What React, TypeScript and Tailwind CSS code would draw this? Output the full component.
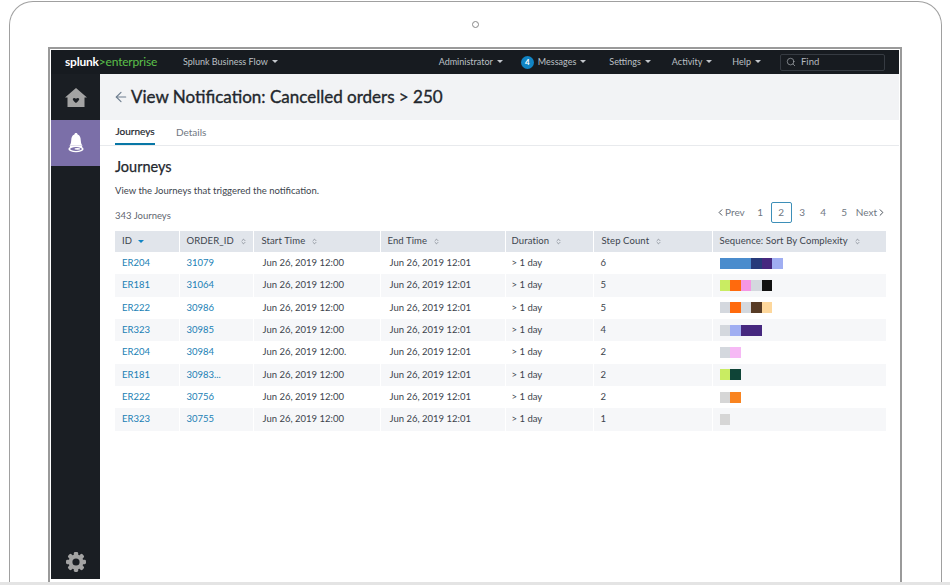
import { ArrowLeft, ChevronLeft, ChevronRight, ChevronsUpDown, Search } from "lucide-react"

const rows = [
  { id: "ER204", order: "31079", start: "Jun 26, 2019 12:00", steps: 6, seq: [["#4a8ccd", 3], ["#263a7a", 1], ["#46287f", 1], ["#a0aef2", 1]] },
  { id: "ER181", order: "31064", start: "Jun 26, 2019 12:00", steps: 5, seq: [["#c9ec62", 1], ["#ff6a0d", 1], ["#f596e4", 1], ["#d4d8de", 1], ["#111111", 1]] },
  { id: "ER222", order: "30986", start: "Jun 26, 2019 12:00", steps: 5, seq: [["#d4d8de", 1], ["#ff6a0d", 1], ["#d4d8de", 1], ["#573b25", 1], ["#fdd79c", 1]] },
  { id: "ER323", order: "30985", start: "Jun 26, 2019 12:00", steps: 4, seq: [["#d4d8de", 1], ["#a0aef2", 1], ["#46287f", 2]] },
  { id: "ER204", order: "30984", start: "Jun 26, 2019 12:00.", steps: 2, seq: [["#d4d8de", 1], ["#f6b9f5", 1]] },
  { id: "ER181", order: "30983...", start: "Jun 26, 2019 12:00", steps: 2, seq: [["#c9ec62", 1], ["#0f4437", 1]] },
  { id: "ER222", order: "30756", start: "Jun 26, 2019 12:00", steps: 2, seq: [["#d6d6d6", 1], ["#f98420", 1]] },
  { id: "ER323", order: "30755", start: "Jun 26, 2019 12:00", steps: 1, seq: [["#d6d6d6", 1]] },
] as { id: string; order: string; start: string; steps: number; seq: [string, number][] }[]

const headers = [
  { label: "ID", width: 64, pad: "pl-[7px]", sorted: true },
  { label: "ORDER_ID", width: 74, pad: "pl-[7px] border-l border-white" },
  { label: "Start Time", width: 127, pad: "pl-[8px] border-l border-white" },
  { label: "End Time", width: 125, pad: "pl-[7px] border-l border-white" },
  { label: "Duration", width: 88, pad: "pl-[6px] border-l border-white" },
  { label: "Step Count", width: 119, pad: "pl-[8px] border-l border-white" },
  { label: "Sequence: Sort By Complexity", width: 174, pad: "pl-[7px] border-l border-white" },
]

function Caret() {
  return <span className="inline-block ml-[4px] mb-[2px] border-x-[3px] border-t-[3px] border-x-transparent border-t-[#c3c7cc]" />
}

function NavItem({ label }: { label: string }) {
  return (
    <span className="text-[9px] text-[#bcc0c5] flex items-center">
      {label}
      <Caret />
    </span>
  )
}

function HomeIcon() {
  return (
    <svg width="22" height="19" viewBox="0 0 22 19">
      <path d="M11 0 L22 9.5 L19.5 9.5 L19.5 19 L2.5 19 L2.5 9.5 L0 9.5 Z" fill="#a3a3a3" />
      <path d="M11 15 C8 12.6 7.6 11.6 7.9 10.7 C8.3 9.6 10 9.6 11 10.8 C12 9.6 13.7 9.6 14.1 10.7 C14.4 11.6 14 12.6 11 15 Z" fill="#1a1e23" />
    </svg>
  )
}

function BellIcon() {
  return (
    <svg width="18" height="20" viewBox="0 0 18 20">
      <path d="M9 0 C10 0 10.6 .7 10.6 1.6 C13 2.4 13.6 4.6 13.8 7.5 C14 10.5 14.6 11.4 15.4 12.6 L2.6 12.6 C3.4 11.4 4 10.5 4.2 7.5 C4.4 4.6 5 2.4 7.4 1.6 C7.4 .7 8 0 9 0 Z" fill="#ffffff" />
      <path d="M2.6 12.4 L15.4 12.4 L15 14 L3 14 Z" fill="#ffffff" />
      <ellipse cx="9" cy="16" rx="7.6" ry="3.2" fill="#ffffff" />
      <ellipse cx="9" cy="16" rx="5.8" ry="1.9" fill="#7b6fa8" />
      <ellipse cx="10.4" cy="15.9" rx="3" ry="0.8" fill="#ffffff" />
    </svg>
  )
}

function GearIcon() {
  const teeth = [0, 45, 90, 135]
  return (
    <svg width="20" height="20" viewBox="0 0 20 20">
      {teeth.map((deg) => (
        <rect key={deg} x="7.8" y="0" width="4.4" height="20" rx="1.4" fill="#a3a3a3" transform={`rotate(${deg} 10 10)`} />
      ))}
      <circle cx="10" cy="10" r="7.4" fill="#a3a3a3" />
      <circle cx="10" cy="10" r="3.6" fill="#1a1e23" />
    </svg>
  )
}

export default function App() {
  return (
    <div className="w-[950px] h-[585px] bg-white flex flex-col overflow-hidden relative font-['Lato',sans-serif]">
      <div className="absolute left-[471.5px] top-[20.5px] w-[7px] h-[7px] rounded-full border border-[#888]" />

      {/* device frame */}
      <div className="ml-[9px] mt-px w-[933px] h-[581px] border-x border-t border-[#a0a0a0] rounded-t-[24px] pl-[38px] pr-[39px] pt-[45px]">
        <div className="h-full border-x-2 border-t-2 border-[#9a9a9a] pl-px pr-px pt-px">
          <div className="h-[529px] flex flex-col">
            {/* top bar */}
            <div className="h-6 shrink-0 bg-[#171b20] flex items-center">
              <div className="w-[132px] pl-[14px] text-[12px] leading-none font-bold tracking-[-0.2px] text-white">
                splunk<span className="text-[#5cc04a] font-normal">&gt;enterprise</span>
              </div>
              <NavItem label="Splunk Business Flow" />
              <div className="ml-auto flex items-center">
                <NavItem label="Administrator" />
                <span className="ml-[18px] w-[13px] h-[13px] rounded-full bg-[#1184c4] text-white text-[8px] font-bold flex items-center justify-center">4</span>
                <span className="ml-[4px]"><NavItem label="Messages" /></span>
                <span className="ml-[23px]"><NavItem label="Settings" /></span>
                <span className="ml-[21px]"><NavItem label="Activity" /></span>
                <span className="ml-[20px]"><NavItem label="Help" /></span>
                <div className="ml-[19px] mr-[14px] w-[105px] h-[17px] border border-[#363b42] rounded-[2px] flex items-center pl-[5px] text-[9.5px] text-[#b4b8bd]">
                  <Search size={10} strokeWidth={1.5} className="mr-[5px]" />
                  Find
                </div>
              </div>
            </div>

            <div className="flex flex-1 min-h-0">
              {/* sidebar */}
              <div className="w-[49px] shrink-0 bg-[#1a1e23] flex flex-col items-center">
                <div className="h-[46px] w-full flex items-center justify-center"><HomeIcon /></div>
                <div className="h-[46px] w-full bg-[#7b6fa8] flex items-center justify-center"><BellIcon /></div>
                <div className="mt-auto mb-[7px]"><GearIcon /></div>
              </div>

              {/* content */}
              <div className="flex-1 min-w-0 bg-white">
                <div className="h-[46px] bg-[#f2f3f5] flex items-center pl-[13px]">
                  <ArrowLeft size={16} strokeWidth={1.75} className="text-[#6f7f90] mr-[2px]" />
                  <h1 className="text-[17px] text-[#23272d] [-webkit-text-stroke:0.35px_#23272d]">View Notification: Cancelled orders &gt; 250</h1>
                </div>

                <div className="h-[26px] border-b border-[#e8eaed] flex pl-[15px] text-[10px]">
                  <div className="h-[25px] w-10 border-b-2 border-[#0877a6] text-[#23272d] [-webkit-text-stroke:0.2px_#23272d] flex items-center justify-center">Journeys</div>
                  <div className="ml-[21px] h-[25px] text-[#6f7782] flex items-center">Details</div>
                </div>

                <div className="pl-[15px] pr-[14px]">
                  <h2 className="mt-[12px] text-[14.5px] leading-[18px] text-[#23272d] [-webkit-text-stroke:0.25px_#23272d]">Journeys</h2>
                  <p className="mt-[9px] text-[9.5px] leading-3 text-[#3c444d]">View the Journeys that triggered the notification.</p>

                  <div className="mt-[5px] h-[21px] flex items-center justify-between">
                    <span className="mt-[7px] text-[9.5px] text-[#5f6670]">343 Journeys</span>
                    <div className="flex items-center text-[10px] text-[#6f7782]">
                      <ChevronLeft size={11} strokeWidth={2} className="text-[#3c444d] -mr-px" />
                      <span>Prev</span>
                      <span className="w-[21px] ml-[5px] text-center">1</span>
                      <span className="w-[21px] h-[21px] rounded-[2px] border border-[#3d8fb8] flex items-center justify-center">2</span>
                      <span className="w-[21px] text-center">3</span>
                      <span className="w-[21px] text-center">4</span>
                      <span className="w-[21px] text-center">5</span>
                      <span className="ml-px">Next</span>
                      <ChevronRight size={11} strokeWidth={2} className="text-[#3c444d] -ml-px -mr-[2px]" />
                    </div>
                  </div>

                  <table className="mt-[8px] w-[771px] table-fixed border-collapse text-[9.5px]">
                    <colgroup>
                      {headers.map((h) => (
                        <col key={h.label} style={{ width: h.width }} />
                      ))}
                    </colgroup>
                    <thead>
                      <tr className="h-[21px]">
                        {headers.map((h) => (
                          <th key={h.label} className={`bg-[#e1e5eb] text-left font-normal text-[#3c444d] tracking-[0.1px] ${h.pad}`}>
                            <span className="inline-flex items-center">
                              {h.label}
                              {h.sorted ? (
                                <span className="inline-block ml-[6px] border-x-[3px] border-t-[3px] border-x-transparent border-t-[#1184c4]" />
                              ) : (
                                <ChevronsUpDown size={7} strokeWidth={2} className="ml-[6px] text-[#5f6670]" />
                              )}
                            </span>
                          </th>
                        ))}
                      </tr>
                    </thead>
                    <tbody>
                      {rows.map((r, i) => {
                        const bg = i % 2 === 1 ? "bg-[#f6f7f9]" : "bg-white"
                        return (
                          <tr key={r.order} className="h-[22.35px] text-[#3c444d]">
                            <td className={`${bg} pl-[7px] text-[#1a7fb5]`}>{r.id}</td>
                            <td className={`${bg} pl-[7px] border-l border-white text-[#1a7fb5]`}>{r.order}</td>
                            <td className={`${bg} pl-[9px] border-l border-white`}>{r.start}</td>
                            <td className={`${bg} pl-[9px] border-l border-white`}>Jun 26, 2019 12:01</td>
                            <td className={`${bg} pl-[6px] border-l border-white`}>&gt; 1 day</td>
                            <td className={`${bg} pl-[7px] border-l border-white`}>{r.steps}</td>
                            <td className={`${bg} pl-[7px] border-l border-white`}>
                              <div className="flex h-[11px]">
                                {r.seq.map(([color, units], j) => (
                                  <span key={j} className="h-full" style={{ backgroundColor: color, width: units * 10.5 }} />
                                ))}
                              </div>
                            </td>
                          </tr>
                        )
                      })}
                    </tbody>
                  </table>
                </div>
              </div>
            </div>
          </div>
        </div>
      </div>
      <div className="h-[3px] bg-[#e4e4e4]" />
    </div>
  )
}
